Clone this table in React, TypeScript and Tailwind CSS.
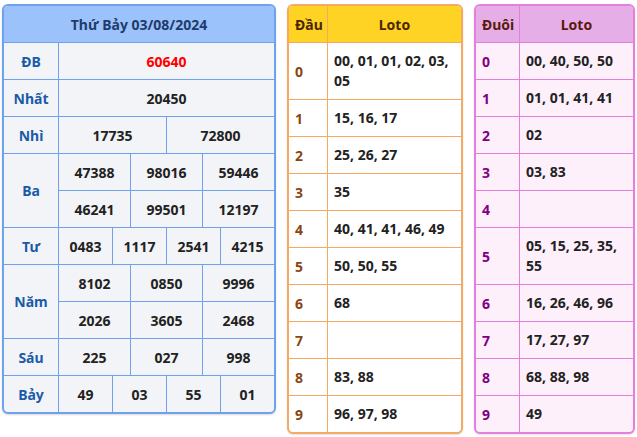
import React from "react";

const font = { fontFamily: '"Noto Sans", "Open Sans", sans-serif' };

type Row = { label: string; cells: string[][]; red?: boolean };

const rows: Row[] = [
  { label: "ĐB", cells: [["60640"]], red: true },
  { label: "Nhất", cells: [["20450"]] },
  { label: "Nhì", cells: [["17735", "72800"]] },
  { label: "Ba", cells: [["47388", "98016", "59446"], ["46241", "99501", "12197"]] },
  { label: "Tư", cells: [["0483", "1117", "2541", "4215"]] },
  { label: "Năm", cells: [["8102", "0850", "9996"], ["2026", "3605", "2468"]] },
  { label: "Sáu", cells: [["225", "027", "998"]] },
  { label: "Bảy", cells: [["49", "03", "55", "01"]] },
];

const dau = [
  "00, 01, 01, 02, 03, 05",
  "15, 16, 17",
  "25, 26, 27",
  "35",
  "40, 41, 41, 46, 49",
  "50, 50, 55",
  "68",
  "",
  "83, 88",
  "96, 97, 98",
];

const duoi = [
  "00, 40, 50, 50",
  "01, 01, 41, 41",
  "02",
  "03, 83",
  "",
  "05, 15, 25, 35, 55",
  "16, 26, 46, 96",
  "17, 27, 97",
  "68, 88, 98",
  "49",
];

function ResultTable() {
  return (
    <div className="w-[274px] border-2 border-[#6ea2ef] rounded-md overflow-hidden bg-[#f3f4f7] shadow-[0_1px_2px_rgba(0,0,0,0.15)]">
      <div className="h-[36px] bg-[#9cc2fb] flex items-center justify-center text-[14px] font-bold text-[#1f3b6b]">
        Thứ Bảy 03/08/2024
      </div>
      {rows.map((r) => (
        <div key={r.label} className="flex border-t border-[#6ea2ef]">
          <div className="w-[54px] shrink-0 flex items-center justify-center text-[14px] font-bold text-[#1a5ba8]">
            {r.label}
          </div>
          <div className="flex-1 flex flex-col border-l border-[#6ea2ef]">
            {r.cells.map((line, i) => (
              <div key={i} className={`flex h-[36px] ${i > 0 ? "border-t border-[#6ea2ef] h-[37px]" : ""}`}>
                {line.map((n, j) => (
                  <div
                    key={j}
                    className={`flex-1 flex items-center justify-center text-[14px] font-bold ${
                      r.red ? "text-[#ff0000]" : "text-[#222]"
                    } ${j > 0 ? "border-l border-[#6ea2ef]" : ""}`}
                  >
                    {n}
                  </div>
                ))}
              </div>
            ))}
          </div>
        </div>
      ))}
    </div>
  );
}

function LotoTable({
  title,
  data,
  width,
  firstCol,
  border,
  headBg,
  headText,
  bodyBg,
  digitColor,
}: {
  title: string;
  data: string[];
  width: string;
  firstCol: string;
  border: string;
  headBg: string;
  headText: string;
  bodyBg: string;
  digitColor: string;
}) {
  return (
    <div className={`${width} border-2 ${border} rounded-md overflow-hidden ${bodyBg} shadow-[0_1px_2px_rgba(0,0,0,0.12)]`}>
      <div className={`flex h-[36px] ${headBg} ${headText} text-[14px] font-bold`}>
        <div className={`${firstCol} shrink-0 flex items-center px-1.5`}>{title}</div>
        <div className={`flex-1 flex items-center justify-center border-l ${border}`}>Loto</div>
      </div>
      {data.map((d, i) => (
        <div key={i} className={`flex border-t ${border} text-[14px] font-bold`}>
          <div className={`${firstCol} shrink-0 flex items-center px-1.5 ${digitColor}`}>{i}</div>
          <div className={`flex-1 border-l ${border} px-1.5 py-2 leading-5 min-h-[36px] text-[#222]`}>
            {d}
          </div>
        </div>
      ))}
    </div>
  );
}

export default function App() {
  return (
    <div style={font} className="w-[637px] h-[437px] bg-white pl-[2px] pt-[4px] flex items-start gap-[11px]">
      <ResultTable />
      <LotoTable
        title="Đầu"
        data={dau}
        width="w-[176px]"
        firstCol="w-[38px]"
        border="border-[#f5a963]"
        headBg="bg-[#ffd324]"
        headText="text-[#4a2600]"
        bodyBg="bg-white"
        digitColor="text-[#8b4513]"
      />
      <LotoTable
        title="Đuôi"
        data={duoi}
        width="w-[161px]"
        firstCol="w-[43px]"
        border="border-[#e57fdd]"
        headBg="bg-[#e6aee6]"
        headText="text-[#5a1a10]"
        bodyBg="bg-[#fdf0fb]"
        digitColor="text-[#800080]"
      />
    </div>
  );
}
